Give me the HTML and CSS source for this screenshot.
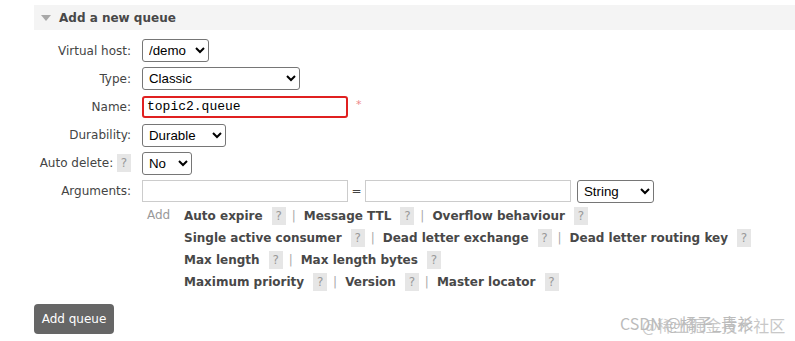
FILE: index.html
```html
<!DOCTYPE html>
<html lang="en">
  <head>
    <meta charset="UTF-8" />
    <title>Add a new queue</title>
    <link rel="stylesheet" href="styles.css">
  </head>
  <body>
    <div class="section">
      <h2 class="section-title"><span class="arrow"></span>Add a new queue</h2>

      <div class="form">
        <label class="form-label">Virtual host:</label>
        <div class="form-field">
          <select class="sel sel-vhost"><option>/demo</option></select>
        </div>

        <label class="form-label">Type:</label>
        <div class="form-field">
          <select class="sel sel-type"><option>Classic</option></select>
        </div>

        <label class="form-label">Name:</label>
        <div class="form-field">
          <input class="txt txt-name" type="text" value="topic2.queue" />
          <span class="mand">*</span>
        </div>

        <label class="form-label">Durability:</label>
        <div class="form-field">
          <select class="sel sel-dur"><option>Durable</option></select>
        </div>

        <label class="form-label">Auto delete: <span class="help">?</span></label>
        <div class="form-field">
          <select class="sel sel-no"><option>No</option></select>
        </div>

        <label class="form-label">Arguments:</label>
        <div class="form-field">
          <input class="txt txt-arg" type="text" />
          <span class="eq">=</span>
          <input class="txt txt-arg" type="text" />
          <select class="sel sel-str"><option>String</option></select>
        </div>
      </div>

      <div class="args-help">
        <span class="add">Add</span>
        <div class="arg-links">
          <div class="arg-row">
            <b>Auto expire</b><span class="help">?</span><span class="sep">|</span>
            <b>Message TTL</b><span class="help">?</span><span class="sep">|</span>
            <b>Overflow behaviour</b><span class="help">?</span>
          </div>
          <div class="arg-row">
            <b>Single active consumer</b><span class="help">?</span><span class="sep">|</span>
            <b>Dead letter exchange</b><span class="help">?</span><span class="sep">|</span>
            <b>Dead letter routing key</b><span class="help">?</span>
          </div>
          <div class="arg-row">
            <b>Max length</b><span class="help">?</span><span class="sep">|</span>
            <b>Max length bytes</b><span class="help">?</span>
          </div>
          <div class="arg-row">
            <b>Maximum priority</b><span class="help">?</span><span class="sep">|</span>
            <b>Version</b><span class="help">?</span><span class="sep">|</span>
            <b>Master locator</b><span class="help">?</span>
          </div>
        </div>
      </div>

      <button class="btn">Add queue</button>
    </div>

    <div class="watermark">
      <span class="wm-a">CSDN @橘子_青衫</span>
      <span class="wm-b">@稀土掘金技术社区</span>
    </div>
  </body>
</html>
```

FILE: styles.css
```css
body {
  margin: 0;
  font-family: "DejaVu Sans", Verdana, sans-serif;
  font-size: 12px;
  color: #444;
  background: #fff;
}
.section {
  padding: 5px 0 0 34px;
}
.section-title {
  display: flex;
  align-items: center;
  margin: 0;
  height: 25px;
  padding-left: 7px;
  background: #f4f4f4;
  font-size: 12px;
  font-weight: bold;
  color: #484848;
}
.arrow {
  width: 0;
  height: 0;
  border-left: 5px solid transparent;
  border-right: 5px solid transparent;
  border-top: 6px solid #a8a8a8;
  margin-right: 8px;
}
.form {
  display: grid;
  grid-template-columns: 97px auto;
  grid-auto-rows: 23px;
  column-gap: 11px;
  row-gap: 5.2px;
  margin-top: 9px;
  align-items: center;
}
.form-label {
  text-align: right;
  color: #444;
}
.form-field {
  display: flex;
  align-items: center;
}
.sel {
  font-family: "Liberation Sans", Arial, sans-serif;
  font-size: 13.3px;
  height: 23px;
  border: 1px solid #767676;
  border-radius: 3px;
  background: #fff;
  color: #000;
  padding: 0 2px;
}
.sel-vhost { width: 67px; }
.sel-type { width: 158px; }
.sel-dur { width: 84px; }
.sel-no { width: 50px; }
.sel-str { width: 77px; margin-left: 6px; }
.txt {
  height: 22px;
  box-sizing: border-box;
  border: 1px solid #ccc;
  padding: 0 3px;
  font-family: "Liberation Mono", "Courier New", monospace;
  font-size: 13px;
  color: #000;
}
.txt-name {
  width: 206px;
  border: 2px solid #e02020;
  border-radius: 3px;
}
.txt-arg {
  width: 206px;
}
.mand {
  color: #e88;
  margin-left: 8px;
  font-size: 11px;
  margin-top: -4px;
}
.eq {
  width: 17px;
  text-align: center;
  color: #444;
}
.help {
  display: inline-block;
  background: #e6e6e6;
  color: #999;
  width: 14px;
  height: 18px;
  line-height: 18px;
  text-align: center;
  font-weight: normal;
}
.args-help {
  display: flex;
  margin: 4px 0 0 108px;
}
.add {
  color: #999;
  margin-left: 5px;
  width: 37px;
  line-height: 16px;
}
.arg-links {
  display: flex;
  flex-direction: column;
  gap: 4px;
}
.arg-row {
  display: flex;
  align-items: center;
  height: 18px;
}
.arg-row b {
  color: #484848;
  margin-right: 9px;
}
.sep {
  color: #aaa;
  margin: 0 8px 0 6px;
}
.btn {
  display: block;
  margin-top: 13px;
  width: 80px;
  height: 30px;
  border: none;
  border-radius: 4px;
  background: #666;
  color: #fff;
  font-family: "DejaVu Sans", Verdana, sans-serif;
  font-size: 12px;
  padding: 0;
}
.watermark {
  position: absolute;
  left: 620px;
  top: 311px;
  font-family: "Noto Sans CJK SC", sans-serif;
  font-size: 16px;
  color: #bbb;
}
.wm-a {
  position: absolute;
  left: 0;
  top: 0;
  white-space: nowrap;
}
.wm-b {
  position: absolute;
  left: 22px;
  top: 2px;
  white-space: nowrap;
  opacity: 0.8;
}
```
